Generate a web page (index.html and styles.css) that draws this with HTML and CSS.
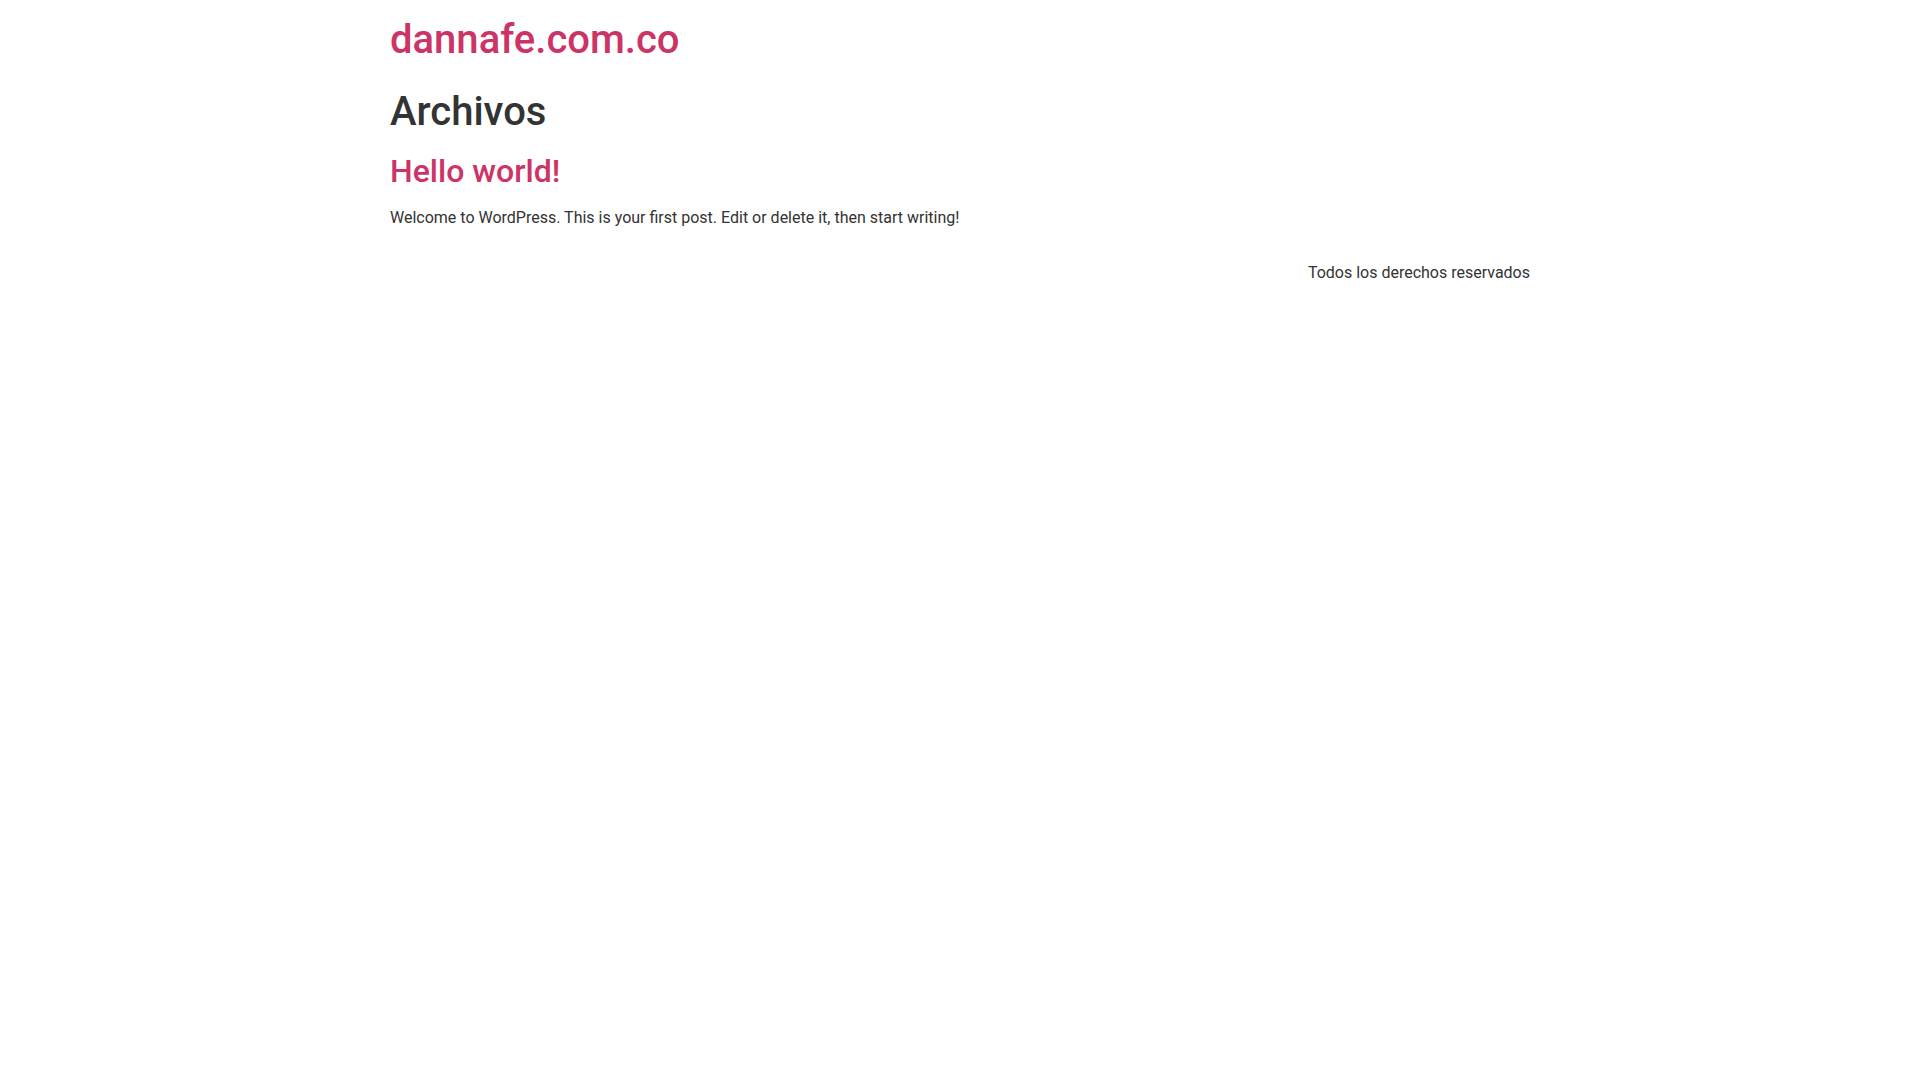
FILE: index.html
```html
<!DOCTYPE html>
<html lang="es">
<head>
<meta charset="utf-8">
<title>Archivos – dannafe.com.co</title>
<link rel="stylesheet" href="styles.css">
</head>
<body>
<header class="site-header">
  <div class="site-branding">
    <h1 class="site-title"><a href="#">dannafe.com.co</a></h1>
  </div>
</header>
<main class="site-main">
  <div class="page-header">
    <h1 class="entry-title">Archivos</h1>
  </div>
  <div class="page-content">
    <article class="post">
      <h2 class="entry-title"><a href="#">Hello world!</a></h2>
      <p>Welcome to WordPress. This is your first post. Edit or delete it, then start writing!</p>
    </article>
  </div>
</main>
<footer class="site-footer">
  <div class="copyright">
    <p>Todos los derechos reservados</p>
  </div>
</footer>
</body>
</html>
```
FILE: styles.css
```css
html {
  background: #fff;
}
body {
  margin: 0;
  font-family: Roboto, "Liberation Sans", sans-serif;
  font-size: 16px;
  line-height: 1.5;
  color: #333;
  background: #fff;
}
a {
  color: #c36;
  text-decoration: none;
}
h1, h2 {
  margin-top: 8px;
  margin-bottom: 16px;
  font-weight: 500;
  line-height: 1.2;
}
h1 {
  font-size: 40px;
}
h2 {
  font-size: 32px;
}
p {
  margin-top: 0;
  margin-bottom: 14.4px;
}
.site-header,
.site-main,
.site-footer {
  width: 1140px;
  margin-left: auto;
  margin-right: auto;
}
.site-header {
  display: flex;
  justify-content: space-between;
  padding: 16px 0;
}
.site-header .site-title {
  margin: 0;
}
.site-footer {
  display: flex;
  justify-content: flex-end;
  padding: 16px 0;
}
.site-footer p {
  margin: 0;
}
```
